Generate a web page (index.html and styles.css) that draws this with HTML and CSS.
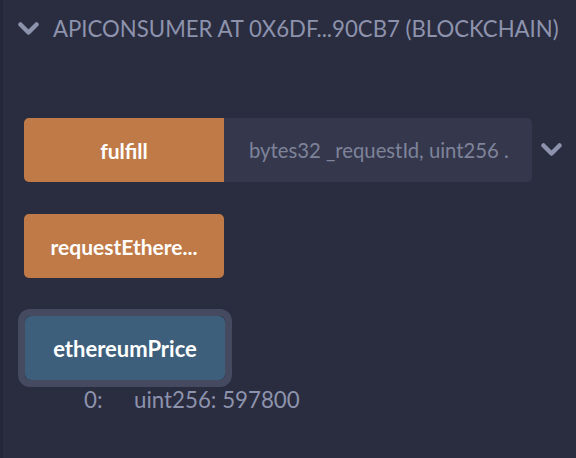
FILE: index.html
```html
<!DOCTYPE html>
<html>
<head>
<meta charset="utf-8">
<link rel="stylesheet" href="styles.css">
</head>
<body>
<div class="panel">
  <div class="header">
    <svg class="chev" width="21" height="14" viewBox="0 0 21 14"><path d="M2.5 2.5 L10.5 10.5 L18.5 2.5" fill="none" stroke="#8d93ad" stroke-width="4.5" stroke-linecap="round" stroke-linejoin="round"/></svg>
    <span class="title">APICONSUMER AT 0X6DF...90CB7 (BLOCKCHAIN)</span>
  </div>
  <div class="funcs">
    <div class="row">
      <button class="btn orange joined">fulfill</button>
      <div class="input">bytes32 _requestId, uint256 .</div>
      <svg class="chev2" width="21" height="14" viewBox="0 0 21 14"><path d="M2.5 2.5 L10.5 10.5 L18.5 2.5" fill="none" stroke="#8d93ad" stroke-width="4.5" stroke-linecap="round" stroke-linejoin="round"/></svg>
    </div>
    <div class="row r2">
      <button class="btn orange">requestEthere...</button>
    </div>
    <div class="row r3">
      <div class="ring"><button class="btn blue">ethereumPrice</button></div>
    </div>
    <div class="output"><span class="idx">0:</span><span>uint256: 597800</span></div>
  </div>
</div>
</body>
</html>
```
FILE: styles.css
```css
html, body { margin: 0; padding: 0; }
body {
  width: 576px; height: 458px; overflow: hidden;
  background: #2a2c3f;
  font-family: Lato, "Open Sans", sans-serif;
}
.panel {
  border-left: 3px solid #25263a;
  height: 458px;
  box-sizing: border-box;
}
.header {
  display: flex; align-items: center;
  padding: 14px 0 0 15px;
  height: 28px;
}
.chev { margin-right: 14px; margin-top: 1px; }
.title {
  color: #8d93ad;
  font-size: 22.2px;
  white-space: nowrap;
}
.funcs { padding: 76px 0 0 21px; }
.row { display: flex; align-items: center; }
.btn {
  border: none; outline: none;
  width: 200px; height: 64px;
  border-radius: 5px;
  color: #fff;
  font-family: Lato, sans-serif;
  font-weight: 700;
  font-size: 21px;
  padding: 0;
}
.orange { background: #c07a48; }
.blue { background: #3e5f7b; }
.joined { border-radius: 5px 0 0 5px; }
.input {
  width: 308px; height: 64px;
  background: #35384c;
  border-radius: 0 5px 5px 0;
  display: flex; align-items: center;
  padding-left: 25px; box-sizing: border-box;
  color: #7e839a;
  font-size: 20.3px;
  white-space: nowrap; overflow: hidden;
}
.chev2 { margin-left: 9px; }
.r2 { margin-top: 32px; }
.r3 { margin-top: 31px; margin-left: -6px; }
.ring {
  border: 7px solid #454a60;
  border-radius: 12px;
  display: flex;
}
.ring .btn { border-radius: 6px; font-size: 22px; }
.output {
  margin: -1px 0 0 60px;
  color: #8d93ad;
  font-size: 22.3px;
  display: flex;
}
.idx { width: 50px; }
```
